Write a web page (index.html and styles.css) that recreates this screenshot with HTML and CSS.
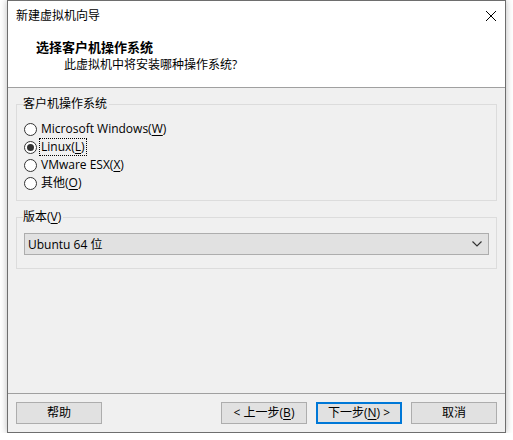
FILE: index.html
```html
<!DOCTYPE html>
<html lang="zh-CN">
<head>
<meta charset="utf-8">
<title>新建虚拟机向导</title>
<link rel="stylesheet" href="styles.css">
</head>
<body>
<div class="window">
  <div class="header">
    <div class="titlebar">
      <span class="title">新建虚拟机向导</span>
      <svg class="close" width="12" height="12" viewBox="0 0 12 12"><path d="M1 1L11 11M11 1L1 11" stroke="#000" stroke-width="1" fill="none"/></svg>
    </div>
    <div class="heading">选择客户机操作系统</div>
    <div class="subheading">此虚拟机中将安装哪种操作系统?</div>
  </div>
  <div class="content">
    <fieldset class="group">
      <legend>客户机操作系统</legend>
      <div class="radio"><span class="dot"></span><span class="label">Microsoft Windows(<u>W</u>)</span></div>
      <div class="radio"><span class="dot checked"></span><span class="label focus">Linux(<u>L</u>)</span></div>
      <div class="radio"><span class="dot"></span><span class="label">VMware ESX(<u>X</u>)</span></div>
      <div class="radio"><span class="dot"></span><span class="label">其他(<u>O</u>)</span></div>
    </fieldset>
    <fieldset class="group version">
      <legend>版本(<u>V</u>)</legend>
      <div class="select">
        <span>Ubuntu 64 位</span>
        <svg class="chev" width="10" height="6" viewBox="0 0 10 6"><path d="M0.5 0.5L5 5L9.5 0.5" stroke="#333" stroke-width="1.2" fill="none"/></svg>
      </div>
    </fieldset>
  </div>
  <div class="footer">
    <button class="btn">帮助</button>
    <span class="spacer"></span>
    <button class="btn">&lt; 上一步(<u>B</u>)</button>
    <button class="btn default">下一步(<u>N</u>) &gt;</button>
    <button class="btn">取消</button>
  </div>
</div>
</body>
</html>
```
FILE: styles.css
```css
html, body {
  margin: 0;
  padding: 0;
  background: #ffffff;
}
body {
  font-family: "Open Sans", "Noto Sans CJK SC", sans-serif;
  font-size: 12px;
  color: #000;
}
.window {
  margin-left: 7px;
  width: 497px;
  height: 431px;
  border: 1px solid #6e6e6e;
  background: #f0f0f0;
  box-shadow: 0 0 7px rgba(0, 0, 0, 0.28);
  display: flex;
  flex-direction: column;
}
.header {
  height: 86px;
  background: #ffffff;
  border-bottom: 1px solid #a0a0a0;
  box-sizing: content-box;
}
.titlebar {
  height: 29px;
  display: flex;
  align-items: center;
  justify-content: space-between;
  padding: 0 8px 0 8px;
}
.title {
  line-height: 16px;
}
.close {
  display: block;
  margin-top: 1px;
}
.heading {
  margin-top: 8px;
  padding-left: 28px;
  font-size: 13px;
  font-weight: bold;
  line-height: 18px;
}
.subheading {
  padding-left: 56px;
  line-height: 18px;
}
.content {
  flex: 1;
  padding-top: 8px;
}
.group {
  margin: 0 8px 0 8px;
  border: 1px solid #dcdcdc;
  padding: 8px 7px 8px 7px;
  min-width: 0;
}
.group legend {
  padding: 0 2px 0 0;
  margin-left: -1px;
  line-height: 16px;
}
.version {
  margin-top: 8px;
  padding-bottom: 13px;
}
.radio {
  height: 18px;
  display: flex;
  align-items: center;
}
.dot {
  width: 11px;
  height: 11px;
  border: 1px solid #333;
  border-radius: 50%;
  background: #fff;
  display: flex;
  align-items: center;
  justify-content: center;
  flex: none;
}
.dot.checked::after {
  content: "";
  width: 7px;
  height: 7px;
  border-radius: 50%;
  background: #333;
}
.label {
  margin-left: 2px;
  padding: 0 1px;
  line-height: 16px;
  border: 1px dotted transparent;
}
.label.focus {
  border-color: #000;
}
.select {
  height: 20px;
  border: 1px solid #adadad;
  background: #e1e1e1;
  display: flex;
  align-items: center;
  justify-content: space-between;
  padding: 0 6px 0 3px;
}
.chev {
  display: block;
}
.footer {
  height: 38px;
  border-top: 1px solid #a0a0a0;
  display: flex;
  align-items: center;
  padding: 0 8px;
  gap: 9px;
}
.spacer {
  flex: 1;
}
.btn {
  width: 86px;
  height: 22px;
  border: 1px solid #adadad;
  background: #e1e1e1;
  font-family: inherit;
  font-size: 12px;
  color: #000;
  padding: 0;
  line-height: 18px;
}
.btn.default {
  border: 2px solid #0078d7;
}
u {
  text-decoration: underline;
  text-underline-offset: 2px;
}
```
